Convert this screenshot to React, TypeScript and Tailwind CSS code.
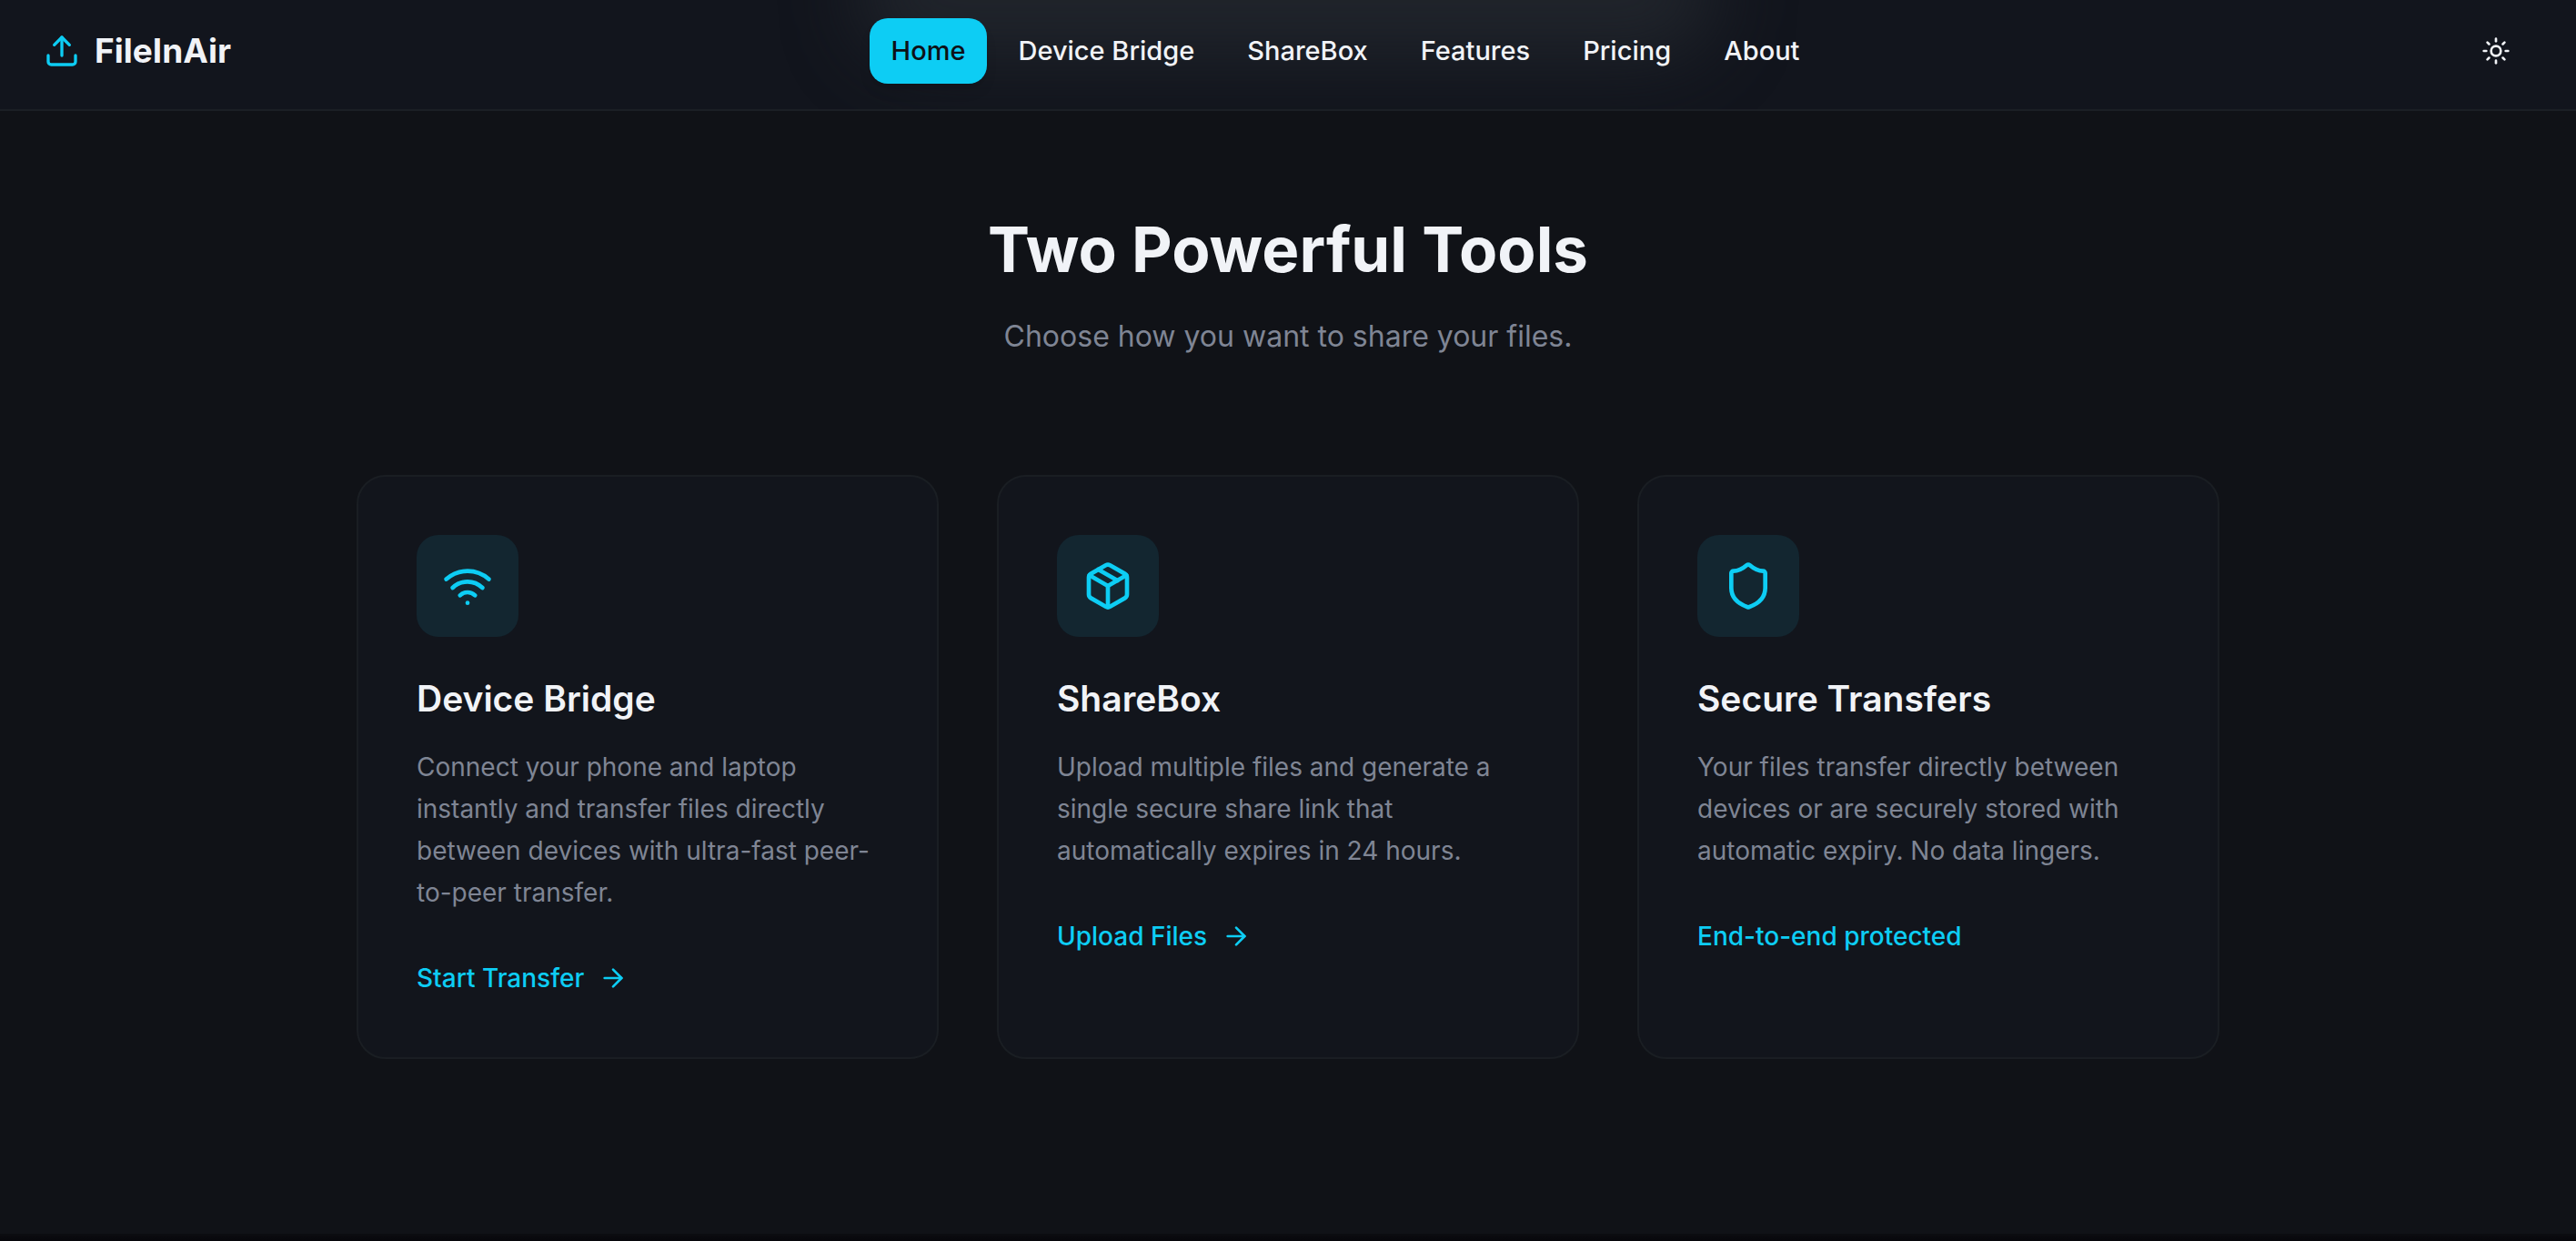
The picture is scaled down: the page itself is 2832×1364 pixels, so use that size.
import { useState } from "react"
import { ArrowRight, Package, Shield, Sun, Upload, Wifi } from "lucide-react"
import type { LucideIcon } from "lucide-react"

interface Tool {
  title: string
  description: string
  action: string
  href?: string
  icon: LucideIcon
}

const NAV_LINKS = ["Home", "Device Bridge", "ShareBox", "Features", "Pricing", "About"]

const TOOLS: Tool[] = [
  {
    title: "Device Bridge",
    description: "Connect your phone and laptop instantly and transfer files directly between devices with ultra-fast peer-to-peer transfer.",
    action: "Start Transfer",
    href: "#device-bridge",
    icon: Wifi,
  },
  {
    title: "ShareBox",
    description: "Upload multiple files and generate a single secure share link that automatically expires in 24 hours.",
    action: "Upload Files",
    href: "#sharebox",
    icon: Package,
  },
  {
    title: "Secure Transfers",
    description: "Your files transfer directly between devices or are securely stored with automatic expiry. No data lingers.",
    action: "End-to-end protected",
    icon: Shield,
  },
]

function Header() {
  const [active, setActive] = useState("Home")

  return (
    <header className="relative overflow-hidden border-b-2 border-[#1b1f25] bg-[#12151d]">
      {/* soft glow behind the nav */}
      <div className="pointer-events-none absolute -top-20 left-1/3 h-36 w-1/3 rounded-full bg-[#20242b] blur-2xl" />
      <div className="relative flex items-center justify-between px-12 pt-5 pb-7">
        <a href="#home" className="flex items-center gap-4 text-[37px] leading-10 font-bold text-[#f1f3f7]">
          <Upload size={40} className="text-[#0dcdf4]" />
          FileInAir
        </a>
        <nav className="flex items-center gap-[10px]">
          {NAV_LINKS.map(label => (
            <a
              key={label}
              href={`#${label.toLowerCase().replace(" ", "-")}`}
              onClick={() => setActive(label)}
              className={`rounded-[20px] px-6 py-4 text-[29px] leading-10 font-medium transition-colors ${
                active === label ? "bg-[#0dcdf4] text-[#0d1117] shadow-lg" : "text-[#f1f3f7] hover:text-[#0dcdf4]"
              }`}
            >{label}</a>
          ))}
        </nav>
        <button type="button" aria-label="Toggle theme" className="flex h-18 w-20 items-center justify-center rounded-[20px] text-[#f1f3f7]">
          <Sun size={32} />
        </button>
      </div>
    </header>
  )
}

function ToolCard({ title, description, action, href, icon: Icon }: Tool) {
  return (
    <article className="rounded-4xl border-2 border-[#1a1e23] bg-[#12151c] p-16">
      <div className="flex size-28 items-center justify-center rounded-3xl bg-[#132630] text-[#0dcdf4]">
        <Icon size={56} />
      </div>
      <h3 className="mt-10 text-[39px] leading-14 font-semibold text-[#f1f3f7]">{title}</h3>
      <p className="mt-6 text-[28px] leading-[46px] text-[#7f8594]">{description}</p>
      {href ? (
        <a href={href} className="mt-12 flex items-center gap-4 text-[28px] leading-[46px] font-medium text-[#0dcdf4]">
          {action}
          <ArrowRight size={32} />
        </a>
      ) : (
        <p className="mt-12 text-[28px] leading-[46px] font-medium text-[#0dcdf4]">{action}</p>
      )}
    </article>
  )
}

export default function App() {
  return (
    <div className="flex min-h-screen flex-col bg-[#101217] font-['Inter',sans-serif]">
      <Header />
      <main className="flex-1 px-12 pt-28 pb-48">
        <div className="text-center">
          <h2 className="text-[69px] leading-20 font-bold text-[#f1f3f7]">Two Powerful Tools</h2>
          <p className="mt-8 text-[32px] leading-12 text-[#7f8594]">Choose how you want to share your files.</p>
        </div>
        <div className="mx-auto mt-32 grid max-w-[2048px] grid-cols-3 gap-16">
          {TOOLS.map(tool => <ToolCard key={tool.title} {...tool} />)}
        </div>
      </main>
      <div className="h-2 bg-linear-to-b from-[#0c0d11] to-[#07070b]" />
    </div>
  )
}
